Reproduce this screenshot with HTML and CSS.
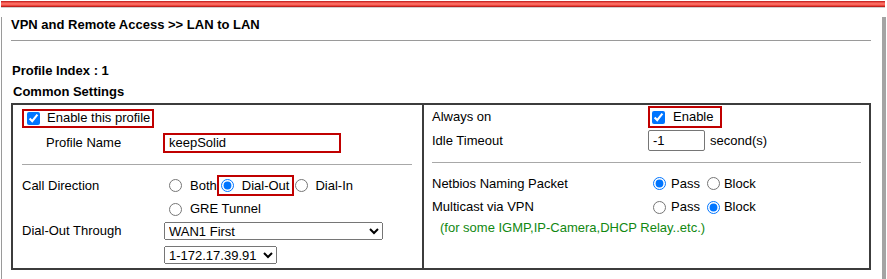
FILE: index.html
```html
<!DOCTYPE html>
<html>
<head>
<meta charset="utf-8">
<link rel="stylesheet" href="styles.css">
</head>
<body>
<div class="bar"></div>
<div class="window">
  <div class="title">VPN and Remote Access &gt;&gt; LAN to LAN</div>
  <div class="rule"></div>
  <div class="heading first">Profile Index : 1</div>
  <div class="heading second">Common Settings</div>
  <div class="panel">
    <div class="cell left">
      <div class="row r-enable">
        <label class="redbox enable-box"><input type="checkbox" class="chk" checked><span class="chk-text">Enable this profile</span></label>
      </div>
      <div class="row r-name">
        <span class="label name-label">Profile Name</span>
        <input type="text" class="name-input" value="keepSolid">
      </div>
      <div class="sep left-sep"></div>
      <div class="row r-call">
        <span class="label call-label">Call Direction</span>
        <input type="radio" name="dir" class="rad rad-first"><span class="rad-text">Both</span>
        <span class="redbox dial-box"><input type="radio" name="dir" class="rad rad-in-box" checked><span class="rad-text">Dial-Out</span></span>
        <input type="radio" name="dir" class="rad rad-after"><span class="rad-text rad-text-in">Dial-In</span>
      </div>
      <div class="row r-gre">
        <input type="radio" name="dir" class="rad rad-first"><span class="rad-text">GRE Tunnel</span>
      </div>
      <div class="row r-through">
        <span class="label call-label">Dial-Out Through</span>
        <select class="sel sel-wan"><option>WAN1 First</option></select>
      </div>
      <div class="row r-ip">
        <select class="sel sel-ip"><option>1-172.17.39.91</option></select>
      </div>
    </div>
    <div class="cell right">
      <div class="row r-always">
        <span class="label right-label">Always on</span>
        <label class="redbox always-box"><input type="checkbox" class="chk" checked><span class="chk-text2">Enable</span></label>
      </div>
      <div class="row r-idle">
        <span class="label right-label">Idle Timeout</span>
        <input type="text" class="idle-input" value="-1">
        <span class="unit">second(s)</span>
      </div>
      <div class="sep right-sep"></div>
      <div class="row r-netbios">
        <span class="label right-label">Netbios Naming Packet</span>
        <input type="radio" name="nb" class="rad rad-r1" checked><span class="pass-text">Pass</span>
        <input type="radio" name="nb" class="rad rad-r2"><span class="block-text">Block</span>
      </div>
      <div class="row r-multi">
        <span class="label right-label">Multicast via VPN</span>
        <input type="radio" name="mc" class="rad rad-r1"><span class="pass-text">Pass</span>
        <input type="radio" name="mc" class="rad rad-r2" checked><span class="block-text">Block</span>
      </div>
      <div class="row r-note">
        <span class="note">(for some IGMP,IP-Camera,DHCP Relay..etc.)</span>
      </div>
    </div>
  </div>
</div>
</body>
</html>
```

FILE: styles.css
```css
html, body {
  margin: 0;
  padding: 0;
  background: #ffffff;
}
body {
  font-family: "Liberation Sans", Arial, sans-serif;
  font-size: 13px;
  line-height: 16px;
  color: #000;
}
.bar {
  margin: 1px 0 0 1px;
  width: 884px;
  height: 6px;
  background: linear-gradient(to bottom, #b81818 0, #f45a50 30%, #ff7a70 50%, #e83a30 80%, #a01010 100%);
  border-bottom: 1px solid #cfcfcf;
}
.window {
  margin-left: 1px;
  width: 880px;
  height: 264px;
  box-sizing: content-box;
  border-left: 1px solid #9a9a9a;
  border-right: 4px solid #a4a4a4;
  border-bottom: 6px solid #c4c4c4;
  padding: 0;
}
.title {
  margin: 9px 0 0 9px;
  font-weight: bold;
}
.rule {
  margin: 7px 0 0 9px;
  width: 860px;
  height: 1px;
  background: #9a9a9a;
}
.heading {
  margin-left: 10px;
  font-weight: bold;
}
.heading.first { margin-top: 22px; }
.heading.second { margin-top: 5px; margin-left: 11px; }
.panel {
  margin: 3px 0 0 9px;
  width: 860px;
  height: 167px;
  box-sizing: border-box;
  border: 2px solid #3c3c3c;
  display: flex;
}
.cell {
  box-sizing: border-box;
}
.left {
  width: 409px;
  padding-left: 9px;
}
.right {
  flex: 1;
  border-left: 2px solid #3c3c3c;
  padding-left: 8px;
}
.row {
  display: flex;
  align-items: center;
}
.label { flex: none; }
.chk, .rad {
  margin: 0;
  width: 13px;
  height: 13px;
  flex: none;
}
.redbox {
  display: inline-flex;
  align-items: center;
  box-sizing: border-box;
  border: 2px solid #c00000;
}
.r-enable { height: 26px; }
.enable-box {
  height: 19px;
  padding: 0 2px 0 3px;
}
.chk-text { margin-left: 7px; }
.r-name { height: 23px; }
.name-label { width: 117px; margin-left: 24px; }
.name-input {
  box-sizing: border-box;
  width: 178px;
  height: 20px;
  border: 2px solid #c00000;
  padding: 0 0 0 4px;
  margin: 0;
  font: 13px "Liberation Sans", Arial, sans-serif;
  color: #000;
  outline: none;
}
.sep {
  height: 1px;
  background: #a8a8a8;
}
.left-sep { width: 390px; margin-top: 10px; }
.r-call { height: 23px; margin-top: 9px; }
.call-label { width: 142px; }
.rad-first { margin-left: 5px; }
.rad-text { margin-left: 8px; }
.dial-box {
  height: 21px;
  padding: 0 3px 0 2px;
}
.rad-after { margin-left: 1px; }
.rad-text-in { margin-left: 7px; }
.r-gre { height: 24px; padding-left: 142px; }
.r-through { height: 20px; }
.sel {
  box-sizing: border-box;
  height: 18px;
  margin: 0;
  font: 13px "Liberation Sans", Arial, sans-serif;
  color: #000;
}
.sel-wan { width: 219px; }
.r-ip { margin-top: 5px; padding-left: 142px; }
.sel-ip { width: 113px; }
.right-label { width: 216px; }
.r-always { height: 24px; }
.always-box {
  width: 74px;
  height: 22px;
  padding-left: 2px;
}
.chk-text2 { margin-left: 8px; }
.r-idle { height: 23px; }
.idle-input {
  box-sizing: border-box;
  width: 57px;
  height: 21px;
  margin: 0;
  padding: 0 0 0 4px;
  border: 1px solid #767676;
  border-radius: 2px;
  font: 13px "Liberation Sans", Arial, sans-serif;
  color: #000;
}
.unit { margin-left: 5px; }
.right-sep { width: 429px; margin-top: 10px; }
.r-netbios { height: 23px; margin-top: 9px; }
.r-multi { height: 24px; }
.rad-r1 { margin-left: 5px; }
.pass-text { margin-left: 5px; }
.rad-r2 { margin-left: 7px; }
.block-text { margin-left: 4px; }
.r-note { height: 17px; padding-left: 8px; }
.note { color: #118811; }
```
